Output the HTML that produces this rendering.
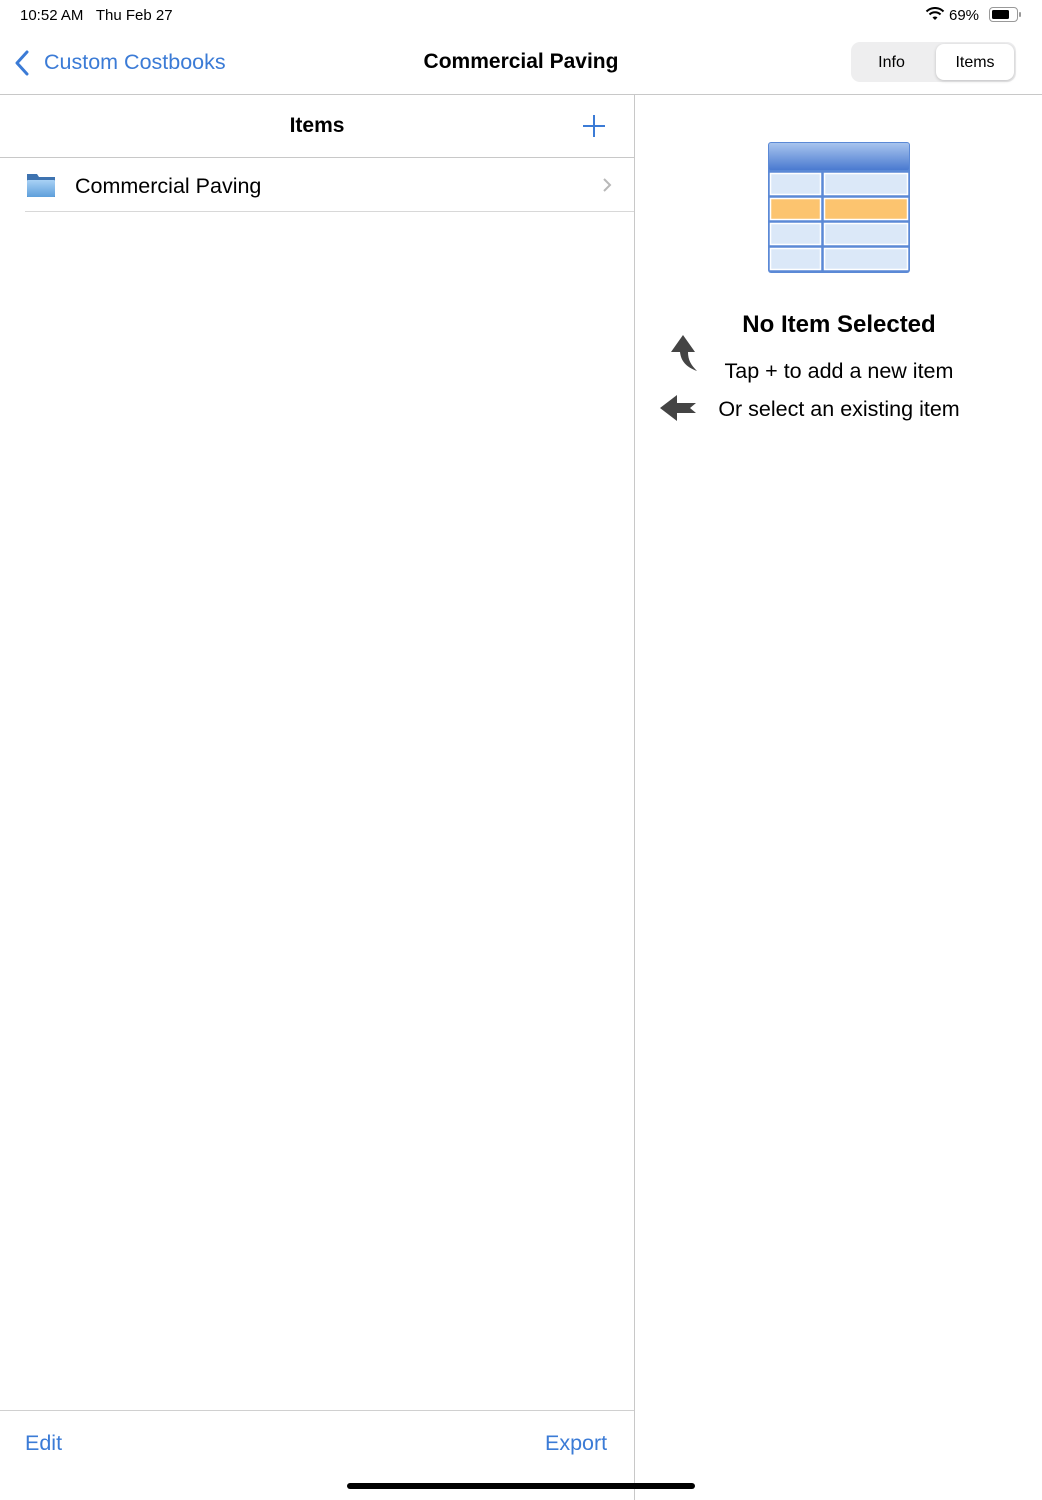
<!DOCTYPE html>
<html><head><meta charset="utf-8"><style>
*{margin:0;padding:0;box-sizing:border-box}
body{width:1042px;height:1500px;background:#fff;font-family:"Liberation Sans",sans-serif;position:relative;overflow:hidden;color:#000}
.a{position:absolute}
.blue{color:#3b7bd6}
</style></head><body>
<div class="a" style="left:20px;top:7px;font-size:15px">10:52 AM&nbsp;&nbsp;&nbsp;Thu Feb 27</div>
<svg class="a" style="left:925px;top:7px" width="20" height="15" viewBox="0 0 20 15"><path d="M10 13 L7.5 10.5 A3.5 3.5 0 0 1 12.5 10.5Z" fill="#000"/><path d="M4.5 7.5 A8 8 0 0 1 15.5 7.5" stroke="#000" stroke-width="2" fill="none"/><path d="M1.5 4.5 A12 12 0 0 1 18.5 4.5" stroke="#000" stroke-width="2" fill="none"/></svg>
<div class="a" style="left:949px;top:7px;font-size:15px">69%</div>
<div class="a" style="left:989px;top:7px;width:29px;height:15px;border:1.5px solid #999;border-radius:4px"><div style="margin:1.5px;width:17px;height:9px;background:#000;border-radius:1.5px"></div></div>
<div class="a" style="left:1019px;top:12px;width:2px;height:5px;background:#999;border-radius:1px"></div>

<svg class="a" style="left:14px;top:50px" width="16" height="26" viewBox="0 0 16 26"><path d="M13 2 L3 13 L13 24" stroke="#3b7bd6" stroke-width="3" fill="none" stroke-linecap="round" stroke-linejoin="round"/></svg>
<div class="a blue" style="left:44px;top:50px;font-size:21.5px">Custom Costbooks</div>
<div class="a" style="left:0;width:1042px;top:50px;font-size:21px;font-weight:bold;text-align:center">Commercial Paving</div>
<div class="a" style="left:851px;top:42px;width:165px;height:40px;background:#eeeeef;border-radius:9px"></div>
<div class="a" style="left:936px;top:44px;width:78px;height:36px;background:#fff;border-radius:8px;box-shadow:0 1px 3px rgba(0,0,0,.2)"></div>
<div class="a" style="left:849px;width:85px;top:54px;font-size:16px;text-align:center">Info</div>
<div class="a" style="left:936px;width:78px;top:54px;font-size:16px;text-align:center">Items</div>
<div class="a" style="left:0;top:94px;width:1042px;height:1px;background:#c8c8c8"></div>
<div class="a" style="left:634px;top:95px;width:1px;height:1405px;background:#c8c8c8"></div>

<div class="a" style="left:0;width:634px;top:114px;font-size:21px;font-weight:bold;text-align:center">Items</div>
<svg class="a" style="left:582px;top:114px" width="24" height="24"><path d="M12 1V23M1 12H23" stroke="#3b7bd6" stroke-width="2"/></svg>
<div class="a" style="left:0;top:157px;width:634px;height:1px;background:#c8c8c8"></div>
<svg class="a" style="left:26px;top:172px" width="30" height="26" viewBox="0 0 30 26"><defs><linearGradient id="f" x1="0" y1="0" x2="0" y2="1"><stop offset="0" stop-color="#a9d1f5"/><stop offset="1" stop-color="#5e9fdb"/></linearGradient></defs><path d="M1 2 H11 L13 5 H29 V25 H1Z" fill="#3e73b0"/><rect x="1" y="8" width="28" height="17" rx="1" fill="url(#f)"/></svg>
<div class="a" style="left:75px;top:174px;font-size:21.5px">Commercial Paving</div>
<svg class="a" style="left:602px;top:177px" width="10" height="16"><path d="M2 2 L8 8 L2 14" stroke="#b8b8b8" stroke-width="2" fill="none"/></svg>
<div class="a" style="left:25px;top:211px;width:609px;height:1px;background:#d8d8d8"></div>

<svg class="a" style="left:767px;top:141px" width="144" height="133" viewBox="0 0 144 133">
<defs><linearGradient id="h" x1="0" y1="0" x2="0" y2="1"><stop offset="0" stop-color="#a8c4ee"/><stop offset="1" stop-color="#4a7ad0"/></linearGradient></defs>
<rect x="1" y="1" width="142" height="131" rx="3" fill="#5b89d6"/>
<rect x="2" y="2" width="140" height="27" rx="2" fill="url(#h)"/>
<g stroke="#fff" stroke-width="1.5">
<rect x="3.5" y="32.5" width="50" height="21" fill="#dbe8f8"/><rect x="57.5" y="32.5" width="83" height="21" fill="#dbe8f8"/>
<rect x="3.5" y="57.5" width="50" height="21" fill="#fcc46f"/><rect x="57.5" y="57.5" width="83" height="21" fill="#fcc46f"/>
<rect x="3.5" y="82.5" width="50" height="21" fill="#dbe8f8"/><rect x="57.5" y="82.5" width="83" height="21" fill="#dbe8f8"/>
<rect x="3.5" y="107.5" width="50" height="21" fill="#dbe8f8"/><rect x="57.5" y="107.5" width="83" height="21" fill="#dbe8f8"/>
</g>
</svg>
<div class="a" style="left:636px;width:406px;top:311px;font-size:24px;font-weight:bold;text-align:center">No Item Selected</div>
<svg class="a" style="left:668px;top:334px" width="30" height="38" viewBox="0 0 30 38"><path d="M15 1 L27 18 H20 C20 26 23 31 29 37 C18 33 13 27 12 18 H3Z" fill="#444"/></svg>
<div class="a" style="left:636px;width:406px;top:359px;font-size:21.5px;text-align:center">Tap + to add a new item</div>
<svg class="a" style="left:659px;top:393px" width="38" height="30" viewBox="0 0 38 30"><path d="M1 15 L18 2 V10 H37 L31 15 L37 20 H18 V28Z" fill="#444"/></svg>
<div class="a" style="left:636px;width:406px;top:397px;font-size:21.5px;text-align:center">Or select an existing item</div>

<div class="a" style="left:0;top:1410px;width:634px;height:1px;background:#d0d0d0"></div>
<div class="a blue" style="left:25px;top:1431px;font-size:21.5px">Edit</div>
<div class="a blue" style="left:545px;top:1431px;font-size:21.5px">Export</div>
<div class="a" style="left:347px;top:1483px;width:348px;height:6px;background:#000;border-radius:3px"></div>
</body></html>
